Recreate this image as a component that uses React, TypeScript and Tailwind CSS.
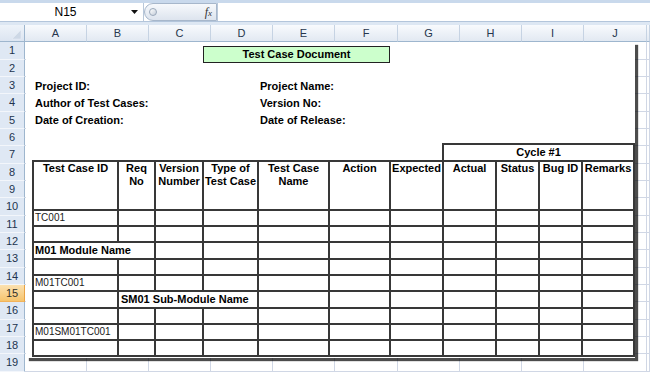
import React from 'react'

const colLetters = ['A', 'B', 'C', 'D', 'E', 'F', 'G', 'H', 'I', 'J', '']
const rows = Array.from({ length: 19 }, (_, i) => i + 1)

const tableCols = [85, 37, 48, 55, 71, 61, 53, 53, 43, 43, 52]

const headers = [
  'Test Case ID',
  'Req\nNo',
  'Version\nNumber',
  'Type of\nTest Case',
  'Test Case\nName',
  'Action',
  'Expected',
  'Actual',
  'Status',
  'Bug ID',
  'Remarks',
]

const line = 'border-2 border-[#383838] p-0'

const FormulaBar = () => {
  return (
    <div className="bg-[#c9d9ec] pt-[3px]">
      <div className="flex h-[18px] bg-white">
        {/* name box */}
        <div className="flex w-[144px] items-center border-r border-[#b9c8da]">
          <div className="flex-1 text-center text-[12px] leading-[18px] text-black">N15</div>
          <svg width="7" height="4" viewBox="0 0 7 4" className="mr-[5px]">
            <polygon points="0,0 7,0 3.5,4" fill="#111" />
          </svg>
        </div>
        {/* fx button */}
        <div className="flex w-[73px] items-center justify-between rounded-l-[9px] border border-[#a7b7cb] bg-gradient-to-b from-[#f7f9fc] to-[#dde4ee] pl-[4px] pr-[4px]">
          <div className="h-[8px] w-[8px] rounded-full border border-[#9aa8ba] bg-gradient-to-br from-white to-[#c5ceda]" />
          <span className="font-['Liberation_Serif'] text-[12px] italic leading-none text-[#333]">
            f<span className="text-[9px]">x</span>
          </span>
        </div>
        <div className="flex-1 border-l border-[#b9c8da] bg-white" />
      </div>
      <div className="h-[4px] border-t border-[#b3c5db] bg-[#dde7f3]" />
    </div>
  )
}

const Sheet = () => {
  return (
    <div className="relative">
      <div className="grid grid-cols-[25px_62px_62px_62px_62px_62px_63px_62px_62px_62px_63px_1fr] grid-rows-[17px_18px_17px_17px_18px_17px_17px_18px_17px_17px_18px_17px_17px_18px_17px_17px_18px_17px_17px_18px]">
        {/* corner */}
        <div className="relative border-b border-r border-[#9eb6ce] bg-gradient-to-b from-[#eef3f9] to-[#dce5f1]">
          <svg width="25" height="17" className="absolute inset-0">
            <polygon points="21,5 21,14 12,14" fill="#cdd8e6" stroke="#e9eef5" strokeWidth="0.5" />
          </svg>
        </div>
        {colLetters.map((c, i) => (
          <div
            key={'h' + i}
            className="border-b border-r border-b-[#9eb6ce] border-r-[#c6d3e3] bg-gradient-to-b from-[#f8fafd] to-[#e2e9f2] text-center text-[11px] leading-[16px] text-[#26364d]"
          >
            {c}
          </div>
        ))}
        {rows.map((r) => (
          <React.Fragment key={r}>
            <div
              className={
                r === 15
                  ? 'border-b border-r border-b-[#f2b35a] border-r-[#e8a244] bg-gradient-to-b from-[#fbe1b0] to-[#f6c46c] text-center text-[11px] leading-[17px] text-[#30302a]'
                  : 'border-b border-r border-b-[#f3f6fb] border-r-[#9eb6ce] bg-[#dfe8f4] text-center text-[11px] leading-[17px] text-[#22344f]'
              }
            >
              {r}
            </div>
            {colLetters.map((_, i) => (
              <div key={i} className="border-b border-r border-[#d0d7e5] bg-white" />
            ))}
          </React.Fragment>
        ))}
      </div>

      {/* pasted picture of the template */}
      <div className="absolute left-[26px] top-[17px] flex h-[316px] w-[609px] flex-col bg-white font-['Liberation_Sans',Arial,sans-serif] text-black shadow-[3px_3px_1px_rgba(0,0,0,0.7)]">
        <div className="ml-[177px] mt-[4px] h-[17px] w-[187px] border border-[#222] bg-[#ccffcc] text-center text-[11px] font-bold leading-[15px]">
          Test Case Document
        </div>

        <div className="ml-[9px] mt-[15px] grid grid-cols-[225px_auto] text-[11px] font-bold leading-[17px]">
          <div>
            <div>Project ID:</div>
            <div>Author of Test Cases:</div>
            <div>Date of Creation:</div>
          </div>
          <div>
            <div>Project Name:</div>
            <div>Version No:</div>
            <div>Date of Release:</div>
          </div>
        </div>

        <table className="ml-[6px] mt-[14px] w-[603px] table-fixed border-collapse text-[11px] text-black">
          <colgroup>
            {tableCols.map((w, i) => (
              <col key={i} style={{ width: w }} />
            ))}
          </colgroup>
          <tbody>
            <tr className="h-[17px]">
              <td colSpan={7} className="p-0" />
              <td colSpan={4} className={line + ' text-center font-bold leading-[13px]'}>
                Cycle #1
              </td>
            </tr>
            <tr className="h-[49px]">
              {headers.map((h, i) => (
                <td key={i} className={line + ' whitespace-pre-line text-center align-top font-bold leading-[13px]'}>
                  {h}
                </td>
              ))}
            </tr>
            <DataRow h="h-[16px]" first="TC001" />
            <DataRow h="h-[16px]" />
            <tr className="h-[17px]">
              <td colSpan={2} className={line + ' pl-[1px] font-bold leading-[13px]'}>
                M01 Module Name
              </td>
              {tableCols.slice(2).map((_, i) => (
                <td key={i} className={line} />
              ))}
            </tr>
            <DataRow h="h-[16px]" />
            <DataRow h="h-[16px]" first="M01TC001" />
            <tr className="h-[17px]">
              <td className={line} />
              <td colSpan={3} className={line + ' pl-[2px] font-bold leading-[13px]'}>
                SM01 Sub-Module Name
              </td>
              {tableCols.slice(4).map((_, i) => (
                <td key={i} className={line} />
              ))}
            </tr>
            <DataRow h="h-[16px]" />
            <DataRow h="h-[16px]" first="M01SM01TC001" />
            <DataRow h="h-[16px]" />
          </tbody>
        </table>
      </div>
    </div>
  )
}

const DataRow = ({ h, first }: { h: string; first?: string }) => {
  return (
    <tr className={h}>
      {tableCols.map((_, i) => (
        <td key={i} className={line + ' pl-[1px] text-[10px] leading-[12px] text-[#1a1a1a]'}>
          {i === 0 ? first : null}
        </td>
      ))}
    </tr>
  )
}

const App = () => {
  return (
    <div className="h-[373px] w-[650px] overflow-hidden bg-white font-['Liberation_Sans',Arial,sans-serif]">
      <FormulaBar />
      <Sheet />
    </div>
  )
}

export default App
